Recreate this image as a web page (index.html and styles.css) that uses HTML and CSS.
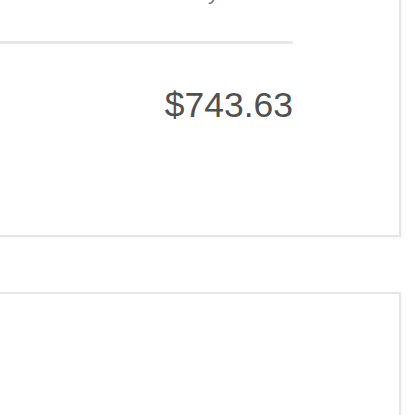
FILE: index.html
```html
<!DOCTYPE html>
<html>
<head>
<meta charset="utf-8">
<link rel="stylesheet" href="styles.css">
</head>
<body>
<div class="page">
  <div class="card card-summary">
    <div class="card-head"><span class="label">Total Monthly</span></div>
    <div class="divider"></div>
    <div class="price">$743.63</div>
  </div>
  <div class="card card-next"></div>
</div>
</body>
</html>
```
FILE: styles.css
```css
html, body {
  margin: 0;
  padding: 0;
  background: #ffffff;
  overflow: hidden;
  height: 415px;
}
.page {
  margin-left: -20px;
  margin-top: -61px;
  width: 421px;
  display: flex;
  flex-direction: column;
  gap: 55px;
  font-family: "Liberation Sans", Arial, sans-serif;
  color: #5a5a5a;
}
.card {
  box-sizing: border-box;
  border: 2px solid #e6e6e6;
  background: #fff;
  box-shadow: 1px 1px 3px rgba(0,0,0,0.04);
}
.card-summary {
  padding: 36px 106px 110px 20px;
}
.card-head {
  height: 30px;
  display: flex;
  justify-content: flex-end;
  padding-right: 74px;
}
.label {
  font-size: 22px;
  line-height: 30px;
  color: #777;
}
.divider {
  margin-top: 34px;
  height: 3px;
  background: #e8e8e8;
  margin-left: -20px;
}
.price {
  margin-top: 41px;
  font-size: 35.5px;
  line-height: 40px;
  text-align: right;
  color: #505050;
}
.card-next {
  height: 200px;
}
```
